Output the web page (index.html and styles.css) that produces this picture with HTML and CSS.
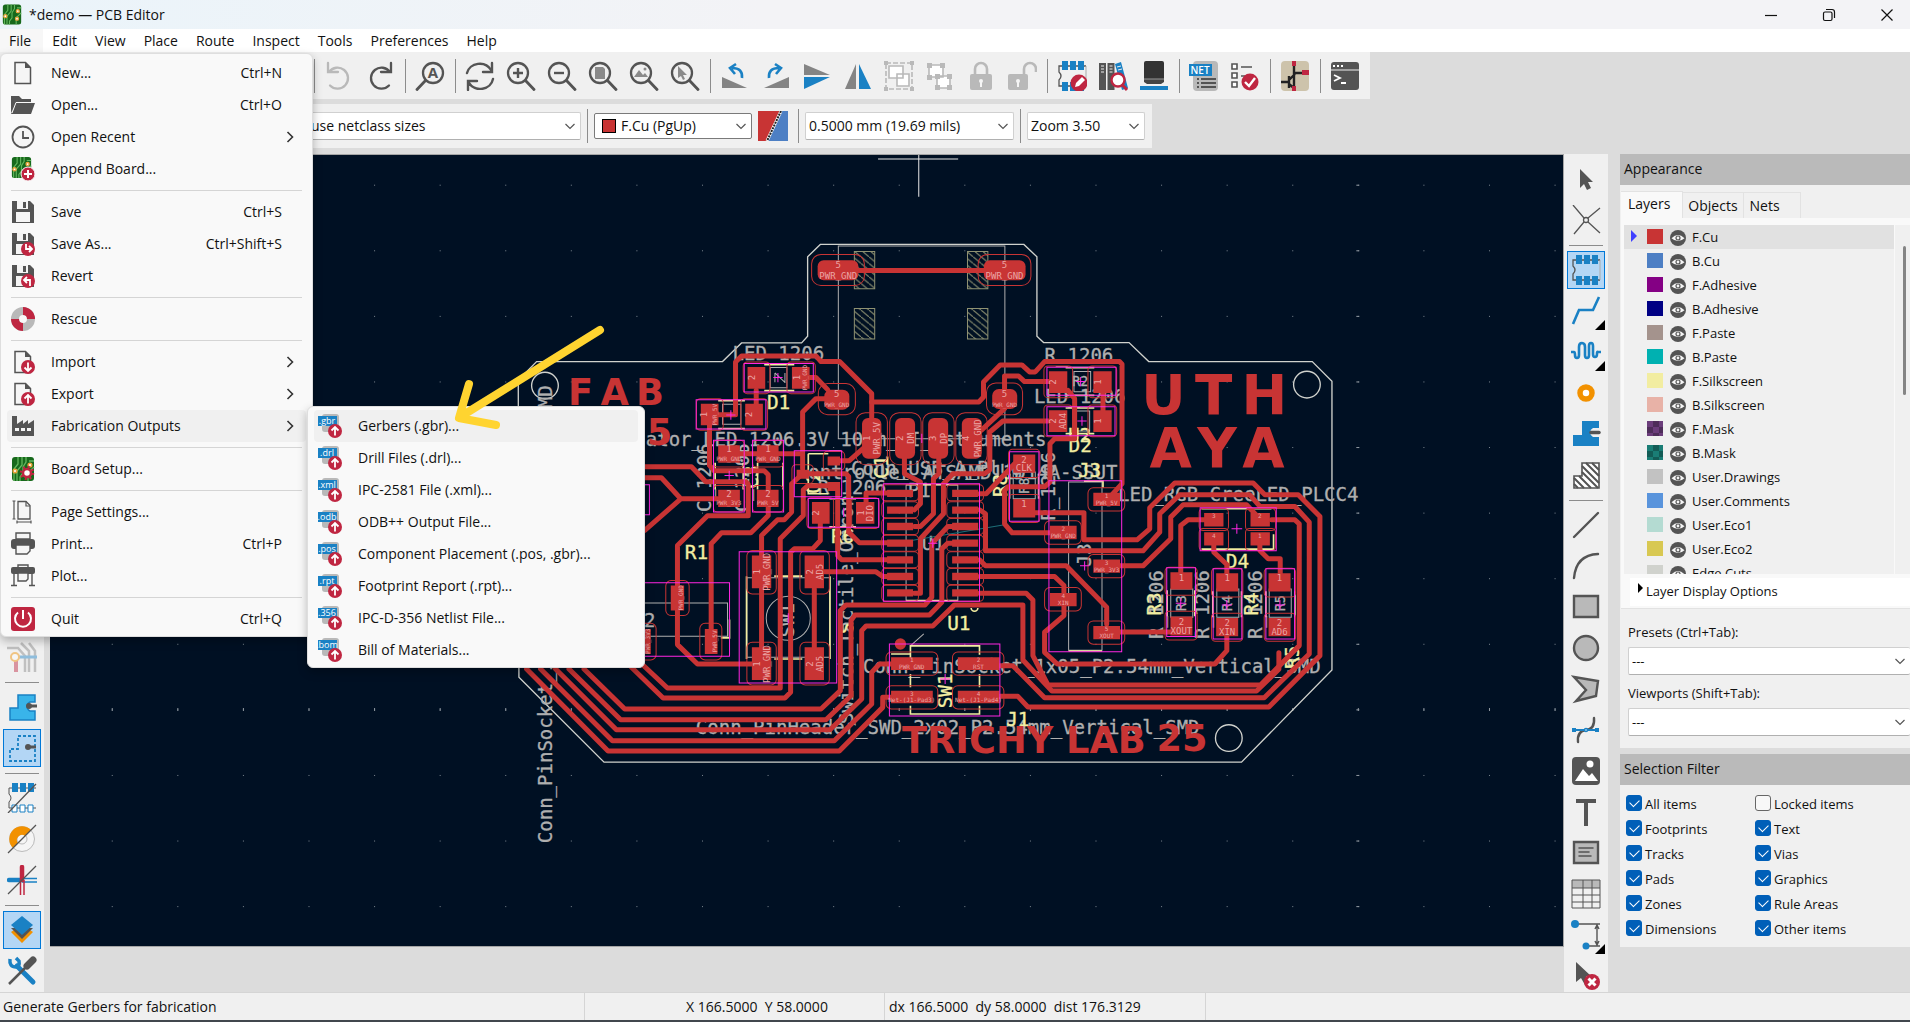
FILE: index.html
```html
<!DOCTYPE html>
<html lang="en">
<head>
<meta charset="utf-8">
<title>*demo — PCB Editor</title>
<link rel="stylesheet" href="styles.css">
</head>
<body>
<svg class="defs" aria-hidden="true">
  <defs>
    <symbol id="pcb" viewBox="0 0 24 24"><rect x="1" width="22" height="24" rx="3" fill="#17691c"/><path d="M7 0v7l-4 5v12M11 0v8l-5 6v10M15 0v5l-3 5v6l-3 4v4M23 10l-6 6v8M23 4h-5" fill="none" stroke="#63b85f" stroke-width="1.3"/><g fill="#fff" stroke="#e7a33c" stroke-width="1.6"><circle cx="4" cy="14" r="1.8"/><circle cx="19" cy="8" r="1.8"/><circle cx="18" cy="17" r="1.8"/></g></symbol>
    <symbol id="floppy" viewBox="0 0 24 24"><path d="M1 1h18l4 4v18H1z" fill="#545454"/><path d="M6 1h11v8H6zM5 12h14v10H5z" fill="#f5f5f5"/><path d="M12 2h3v6h-3z" fill="#545454"/></symbol>
    <symbol id="doc" viewBox="0 0 24 24"><path d="M4 1.500h10.500l5 5v16H4z" fill="#f5f5f5" stroke="#545454" stroke-width="1.500"/><path d="M14 1v6h6z" fill="#545454"/></symbol>
    <symbol id="up" viewBox="0 0 24 24"><circle cx="17" cy="17" r="7" fill="#bf2641"/><path d="M17 21.500v-8M13.500 16.500l3.500-3.500 3.500 3.500" fill="none" stroke="#fff" stroke-width="1.800"/></symbol>
    <symbol id="chev" viewBox="0 0 12 12"><path d="M1.500 4l4.500 4.500L10.500 4" fill="none" stroke="#555" stroke-width="1.200"/></symbol>
    <symbol id="sub" viewBox="0 0 8 14"><path d="M1.500 2l5 5-5 5" fill="none" stroke="#333" stroke-width="1.600"/></symbol>
    <symbol id="file" viewBox="0 0 24 24"><rect x="4" y="0" width="17" height="18" rx="3" fill="#b9b9b9"/><path d="M0 2h19v10H0z" fill="#1a81c4"/></symbol>
    <symbol id="lens" viewBox="0 0 30 30"><circle cx="12" cy="12" r="10" fill="none" stroke="#545454" stroke-width="2.300"/><path d="M19.500 19.500l8.500 9" stroke="#545454" stroke-width="2.800" stroke-linecap="round"/></symbol>
    <symbol id="turn" viewBox="0 0 30 30"><path d="M4 2v9h10M5 11a10.500 10.500 0 1 1 1 13.500" fill="none" stroke="currentColor" stroke-width="2.300" stroke-linecap="round"/></symbol>
    <symbol id="chip" viewBox="0 0 30 30"><path d="M29 5H2v6q4 4 0 8v6h27" fill="none" stroke="#545454" stroke-width="1.300"/><path d="M29 5v20" stroke="#aaa"/><path d="M5 0h6v9H5zM13 0h6v9h-6zM21 0h6v9h-6zM5 21h6v9H5zM13 21h6v9h-6zM21 21h6v9h-6z" fill="#1a81c4"/></symbol>
    <symbol id="eye" viewBox="0 0 16 16"><circle cx="8" cy="8" r="8" fill="#545454"/><path d="M1.500 8.200Q8 2 14.500 8.200 8 14 1.500 8.200z" fill="#f5f5f5"/><circle cx="8" cy="8" r="2" fill="none" stroke="#545454" stroke-width="1.200"/></symbol>
  </defs>
</svg>
<div class="app">
  <header class="titlebar">
    <svg class="logo"><use href="#pcb"/></svg>
    <h1>*demo — PCB Editor</h1>
    <div class="winctl">
      <button aria-label="Minimize"><svg viewBox="0 0 14 14"><path d="M1 7.500h12"/></svg></button>
      <button aria-label="Restore"><svg viewBox="0 0 14 14"><rect x="1.500" y="4" width="8.500" height="8.500" rx="1.500"/><path d="M4 1.500h6a2.500 2.500 0 0 1 2.500 2.500v6"/></svg></button>
      <button aria-label="Close"><svg viewBox="0 0 14 14"><path d="M1.500 1.500l11 11M12.500 1.500l-11 11"/></svg></button>
    </div>
  </header>
  <nav class="menubar">
    <button class="open">File</button><button>Edit</button><button>View</button><button>Place</button><button>Route</button><button>Inspect</button><button>Tools</button><button>Preferences</button><button>Help</button>
  </nav>

  <div class="toolbar main-tools">
    <i class="sep"></i>
    <button class="tool faint" aria-label="Undo"><svg><use href="#turn"/></svg></button>
    <button class="tool" aria-label="Redo"><svg viewBox="0 0 30 30"><g transform="matrix(-1 0 0 1 30 0)"><use href="#turn" width="30" height="30"/></g></svg></button>
    <i class="sep"></i>
    <button class="tool" aria-label="Find"><svg viewBox="0 0 30 30"><g transform="matrix(-1 0 0 1 30 0)"><use href="#lens" width="30" height="30"/></g><text x="18" y="17" class="lens-a">A</text></svg></button>
    <i class="sep"></i>
    <button class="tool" aria-label="Refresh"><svg viewBox="0 0 30 30" class="ln"><path d="M2 12A13 12 0 0 1 26 9M27 2v9h-9M28 18A13 12 0 0 1 4 22M3 29v-9h9"/></svg></button>
    <button class="tool" aria-label="Zoom in"><svg viewBox="0 0 30 30"><use href="#lens"/><path d="M7 12h10M12 7v10" stroke="#545454" stroke-width="2.400"/></svg></button>
    <button class="tool" aria-label="Zoom out"><svg viewBox="0 0 30 30"><use href="#lens"/><path d="M7 12h10" stroke="#545454" stroke-width="2.400"/></svg></button>
    <button class="tool" aria-label="Zoom to page"><svg viewBox="0 0 30 30"><use href="#lens"/><path d="M7 6h8l2 2v10H7z" fill="#8a8a8a"/></svg></button>
    <button class="tool" aria-label="Zoom to objects"><svg viewBox="0 0 30 30"><use href="#lens"/><path d="M5 16l5-7 4 5 2-2 3 4z" fill="#8a8a8a"/><circle cx="16" cy="8" r="1.500" fill="#8a8a8a"/></svg></button>
    <button class="tool" aria-label="Zoom to selection"><svg viewBox="0 0 30 30"><use href="#lens"/><path d="M8 5v12l3-2 2 4 2-1-2-4h4z" fill="#8a8a8a"/></svg></button>
    <i class="sep"></i>
    <button class="tool" aria-label="Rotate left"><svg viewBox="0 0 30 30"><path d="M2 16v11h25z" fill="#848484"/><path d="M22 17q1-10-10-10M16 3l-6 4 5 6" class="bl"/></svg></button>
    <button class="tool" aria-label="Rotate right"><svg viewBox="0 0 30 30"><path d="M28 16v11H3z" fill="#848484"/><path d="M8 17Q7 7 18 7M14 3l6 4-5 6" class="bl"/></svg></button>
    <button class="tool" aria-label="Mirror vertically"><svg viewBox="0 0 30 30"><path d="M2 3l26 11H2z" fill="#848484"/><path d="M2 16h26L2 28z" fill="#1a81c4"/></svg></button>
    <button class="tool" aria-label="Mirror horizontally"><svg viewBox="0 0 30 30"><path d="M13 3v25H2z" fill="#848484"/><path d="M16 3v25h12z" fill="#1a81c4"/></svg></button>
    <button class="tool" aria-label="Group"><svg viewBox="0 0 30 30" class="gr"><path d="M2 2h26v26H2z" stroke-dasharray="5 2" fill="none"/><path d="M5 5h14v12H5zM13 13h12v12H13z" fill="#fff"/><path d="M0 0h4v4H0zM26 0h4v4h-4zM0 26h4v4H0zM26 26h4v4h-4z" fill="#b9b9b9" stroke="none"/></svg></button>
    <button class="tool" aria-label="Ungroup"><svg viewBox="0 0 30 30" class="gr"><path d="M4 4h14v12H4zM12 15h13v12H12z" fill="#fff"/><path d="M2 2h5v5H2zM15 2h5v5h-5zM2 14h5v5H2zM10 13h5v5h-5zM22 13h5v5h-5zM10 24h5v5h-5zM22 24h5v5h-5z" fill="#b9b9b9" stroke="none"/></svg></button>
    <button class="tool" aria-label="Lock"><svg viewBox="0 0 30 30"><path d="M9 14V8a6 6 0 0 1 12 0v6" fill="none" stroke="#b9b9b9" stroke-width="2.600"/><rect x="4" y="13" width="22" height="16" rx="2" fill="#b9b9b9"/><circle cx="15" cy="20" r="2" fill="#f5f5f5"/><path d="M15 20v6" stroke="#f5f5f5" stroke-width="2"/></svg></button>
    <button class="tool" aria-label="Unlock"><svg viewBox="0 0 30 30"><path d="M17 14V8a6 6 0 0 1 12 0v3" fill="none" stroke="#b9b9b9" stroke-width="2.600"/><rect x="1" y="13" width="20" height="16" rx="2" fill="#b9b9b9"/><circle cx="11" cy="20" r="2" fill="#f5f5f5"/><path d="M11 20v6" stroke="#f5f5f5" stroke-width="2"/></svg></button>
    <i class="sep"></i>
    <button class="tool" aria-label="Footprint editor"><svg viewBox="0 0 30 30"><use href="#chip"/><circle cx="22" cy="22" r="8.500" fill="#bf2641"/><path d="M18 26l1-4 6-6 3 3-6 6z" fill="#fff"/></svg></button>
    <button class="tool" aria-label="Footprint libraries"><svg viewBox="0 0 30 30"><path d="M1 2h7v27H1zM9.500 2h7v27h-7z" fill="#545454"/><path d="M17 3l6-2 7 26-6 2z" fill="#1a81c4"/><path d="M3 5h3M3 8h3M3 11h3M11.500 5h3M11.500 8h3M11.500 11h3M19 6l4-1M20 9l4-1" stroke="#eee"/><circle cx="20" cy="19" r="6.500" fill="#fff" stroke="#bf2641" stroke-width="2.400"/><path d="M24.500 24l4.500 5" stroke="#bf2641" stroke-width="3"/></svg></button>
    <button class="tool" aria-label="3D viewer"><svg viewBox="0 0 30 30"><path d="M5 2q0-2 2-2h16q2 0 2 2v16H5z" fill="#333"/><path d="M5 18h20v3l-3 2H8l-3-2z" fill="#444"/><path d="M5 18h20" stroke="#999"/><path d="M1 25h28v4H1z" fill="#1a81c4"/></svg></button>
    <i class="sep"></i>
    <button class="tool" aria-label="Netlist"><svg viewBox="0 0 30 30"><rect x="4" width="25" height="30" rx="4" fill="#b9b9b9"/><path d="M0 3h23v12H0z" fill="#1a81c4"/><path d="M8 18h2M12 18h15M8 22h2M12 22h15M8 26h2M12 26h15" stroke="#545454" stroke-width="1.800"/><text x="11" y="13" class="net">NET</text></svg></button>
    <button class="tool" aria-label="Design rules checker"><svg viewBox="0 0 30 30"><path d="M2 3h5v5H2zM2 12h5v5H2zM2 21h5v5H2zM11 6h11M11 15h6" fill="#fff" stroke="#545454" stroke-width="1.600"/><circle cx="20" cy="21" r="8.500" fill="#bf2641"/><path d="M15 21l4 4 6-8" fill="none" stroke="#fff" stroke-width="2.400"/></svg></button>
    <i class="sep"></i>
    <button class="tool" aria-label="Schematic editor"><svg viewBox="0 0 30 30"><rect x="1" width="28" height="30" rx="4" fill="#cdc3ab"/><path d="M14 0v30M14 12h10M1 21h8M9 15v12M9 19l6-6M9 23l6 5" fill="none" stroke="#222" stroke-width="2.400"/><path d="M12 0h4v5h-4zM22 9h7v5h-7zM12 25h4v5h-4z" fill="#bf2641"/></svg></button>
    <i class="sep"></i>
    <button class="tool" aria-label="Scripting console"><svg viewBox="0 0 30 30"><rect x="1" y="1" width="28" height="28" rx="3" fill="#545454"/><path d="M1 9h28" stroke="#f0f0f0"/><path d="M3 5h2M7 5h2M11 5h2" stroke="#fff" stroke-width="2"/><path d="M4 14l6 3-6 3M11 22h5" fill="none" stroke="#fff" stroke-width="1.800"/></svg></button>
  </div>

  <div class="toolbar option-tools">
    <span class="combo track"><select aria-label="Track width"><option>use netclass sizes</option></select><svg><use href="#chev"/></svg></span>
    <i class="sep"></i>
    <span class="combo layer"><i class="swatch"></i><select aria-label="Layer"><option>F.Cu (PgUp)</option></select><svg><use href="#chev"/></svg></span>
    <button class="pair" aria-label="Layer pair"><svg viewBox="0 0 30 30"><path d="M0 0h30v30H0z" fill="#4d7fc4"/><path d="M0 0h22L9 30H0z" fill="#c83434"/><path d="M23 0L9 30" stroke="#fff" stroke-width="3"/><path d="M23 0L9 30" stroke="#222" stroke-width="2" stroke-dasharray="2 1"/></svg></button>
    <i class="sep"></i>
    <span class="combo grid"><select aria-label="Grid"><option>0.5000 mm (19.69 mils)</option></select><svg><use href="#chev"/></svg></span>
    <i class="sep"></i>
    <span class="combo zoom"><select aria-label="Zoom"><option>Zoom 3.50</option></select><svg><use href="#chev"/></svg></span>
  </div>

  <main class="work">
    <div class="rail left">
      <button class="tool ghost" aria-label="Ratsnest"><svg viewBox="0 0 30 30"><path d="M0 6h11l7 8v16M14 1l8 8v21M22 1l6 8v21" fill="none" stroke="#888" stroke-width="2.500"/><path d="M9 18v12" stroke="#bf2641" stroke-width="4"/><path d="M9 15h21" stroke="#1a81c4" stroke-width="3"/><circle cx="8" cy="15" r="4" fill="#fff" stroke="#f29100" stroke-width="2"/></svg></button>
      <i class="sep"></i>
      <button class="tool" aria-label="Show filled zones"><svg viewBox="0 0 30 30"><path d="M11 3h17v7h-5a5 5 0 0 0 0 9h5v9H3V16h8z" fill="#39b4ea" stroke="#1a81c4" stroke-width="1.500"/><circle cx="22" cy="14" r="3" fill="#545454"/><path d="M22 14h8" stroke="#545454" stroke-width="3"/></svg></button>
      <button class="tool on" aria-label="Show zone borders"><svg viewBox="0 0 30 30"><path d="M11 3h17v25H3V16h8z" fill="none" stroke="#1a81c4" stroke-width="1.800" stroke-dasharray="3 2"/><circle cx="21" cy="14" r="3" fill="#545454"/><path d="M22 14h7" stroke="#545454" stroke-width="3"/></svg></button>
      <i class="sep"></i>
      <button class="tool" aria-label="Pad outlines"><svg viewBox="0 0 30 30"><path d="M29 5H2v6q4 4 0 8v6h27" fill="none" stroke="#545454"/><path d="M5 0h6v9H5zM13 0h6v9h-6zM21 0h6v9h-6z" fill="#1a81c4"/><path d="M5 22h5v7H5zM13 22h5v7h-5zM21 22h5v7h-5z" fill="#fff" stroke="#1a81c4"/><path d="M1 30L29 1" stroke="#545454" stroke-width="1.300"/></svg></button>
      <button class="tool" aria-label="Via outlines"><svg viewBox="0 0 30 30"><circle cx="15" cy="15" r="12.500" fill="#f5f5f5" stroke="#bbb"/><circle cx="15" cy="15" r="5" fill="none" stroke="#bbb"/><path d="M6 24A12.500 12.500 0 0 1 24 6l-6 6a5 5 0 0 0-7 7z" fill="#f29100"/><path d="M1 29L29 1" stroke="#545454" stroke-width="1.300"/></svg></button>
      <button class="tool" aria-label="Track outlines"><svg viewBox="0 0 30 30"><path d="M2 15h13" stroke="#1a81c4" stroke-width="4.500" stroke-linecap="round"/><path d="M15 13.500h15M15 17h15" stroke="#1a81c4" stroke-width="1.500"/><path d="M15 2v13" stroke="#bf2641" stroke-width="4.500" stroke-linecap="round"/><path d="M13.500 15v15M17 15v15" stroke="#bf2641" stroke-width="1.500"/><path d="M1 29L29 1" stroke="#545454" stroke-width="1.300"/></svg></button>
      <i class="sep"></i>
      <button class="tool on" aria-label="Appearance manager"><svg viewBox="0 0 30 30"><path d="M4 17l11 11 11-11-3-2-8 8-8-8z" fill="#f29100"/><path d="M4 13l11 11 11-11z" fill="#545454"/><path d="M15 1l11 9-11 10L4 10z" fill="#1a81c4"/></svg></button>
      <button class="tool" aria-label="Properties manager"><svg viewBox="0 0 30 30"><path d="M10 10l16 16" stroke="#1a81c4" stroke-width="5" stroke-linecap="round"/><path d="M3 3q-1 8 6 8 4-1 3-6L9 2" fill="none" stroke="#1a81c4" stroke-width="3.500"/><path d="M2 28L18 12" stroke="#545454" stroke-width="2.500"/><path d="M20 10l6-6" stroke="#545454" stroke-width="7" stroke-linecap="round"/></svg></button>
    </div>

    <div class="canvas">
      <svg class="board" viewBox="-1350 -525 4539 2370" preserveAspectRatio="xMinYMin slice" role="img" aria-label="Board layout">
        <defs>
          <pattern id="dots" x="-1165" y="-436" width="196.500" height="196.500" patternUnits="userSpaceOnUse"><path d="M0 0h3v3H0z" fill="#7d8790"/></pattern>
          <pattern id="dotrow" x="-1165" y="1132" width="196.500" height="9" patternUnits="userSpaceOnUse"><path d="M0 0h3v9H0z" fill="#9098a0"/></pattern>
          <pattern id="dotcol" x="2564" y="-436" width="9" height="196.500" patternUnits="userSpaceOnUse"><path d="M0 0h9v3H0z" fill="#9098a0"/></pattern>
          <pattern id="hatch" width="24" height="20" patternUnits="userSpaceOnUse"><path d="M0 0l24 20" stroke="#8f9272" stroke-width="3"/></pattern>
        </defs>
        <path d="M-1350-528h4539v2376h-4539z" fill="url(#dots)"/>
        <path d="M-1350 1132h4539v9h-4539z" fill="url(#dotrow)"/>
        <path d="M2564-528h9v2376h-9z" fill="url(#dotcol)"/>
        <path class="cursor" d="M1253-528v128M1131-513h240"/>
        <path class="edge" d="M53 150l55-56h557l57-56h180l18-20v-238l38-37h610l39 37V18l20 19h256l59 57h490l59 59v865l-271 276H310L55 1040z"/>
        <g class="edge"><circle cx="133" cy="166" r="40"/><circle cx="2416" cy="163" r="40"/><circle cx="2182" cy="1222" r="40"/></g>

        <g class="fab">
          <text x="695" y="88">LED_1206</text>
          <text x="435" y="347">ator_LED_1206.3V_100m_TI_nstruments</text>
          <text x="950" y="490">R_1206</text>
          <text x="585" y="1210">Conn_PinHeader_SWD_2x02_P2.54mm_Vertical_SMD</text>
          <text x="1085" y="1027">Conn_PinSocket_1x05_P2.54mm_Vertical_SMD</text>
          <text x="1630" y="95">R_1206</text>
          <text x="1598" y="217">LED_1206</text>
          <text x="1848" y="445" text-anchor="end">ontroller_ATSAMD11D14A-SSUT</text>
          <text x="1050" y="435">Conn_USB_A_Plug</text>
          <text x="1850" y="513">LED_RGB_CreeLED_PLCC4</text>
          <text x="430" y="890">2</text>
          <text x="1220" y="500">P1</text>
          <text x="1262" y="658">U1</text>
          <text transform="translate(153 1537) rotate(-90)">Conn_PinSocket_1x06_P2.54mm_Vertical_SMD</text>
          <text transform="translate(630 545) rotate(-90)">C_1206</text>
          <text transform="translate(745 545) rotate(-90)">C_1206</text>
          <text transform="translate(1055 1180) rotate(-90)">Switch_Tactile_Omron</text>
          <text transform="translate(880 920) rotate(-90)">SW1</text>
          <text transform="translate(1662 570) rotate(-90)">R_1206</text>
          <text transform="translate(1770 707) rotate(-90)">J3</text>
          <text transform="translate(1985 925) rotate(-90)">R_1206</text>
          <text transform="translate(2122 925) rotate(-90)">R_1206</text>
          <text transform="translate(2280 925) rotate(-90)">R_1206</text>
          <g class="small">
            <text transform="translate(2055 842) rotate(-90)">R3</text>
            <text transform="translate(2192 842) rotate(-90)">R4</text>
            <text transform="translate(2350 842) rotate(-90)">R5</text>
            <text transform="translate(1582 490) rotate(-90)">R8</text>
            <text x="1713" y="168">R2</text>
          </g>
        </g>
        <path class="fabline" d="M1012-252h499V325h-499zM738 742h248v238H738zM430 817h250v100H430zM1702 455h100v504h-100zM1215 463h155v347h-155zM665 222h55v60h-55zM808 112h50v60h-50zM1718 124h50v60h-50zM1715 242h50v60h-50zM1536 425h66v80h-66zM2008 775h66v85h-66zM2146 775h66v85h-66zM2303 775h66v85h-66zM822 128l30 28M822 156v-28M852 128v30M1228 946l40-36"/>
        <circle class="fabline" cx="862" cy="863" r="66"/>
        <path class="hatched" d="M1060-236h61v112h-61zM1399-236h61v112h-61zM1060-65h61v91h-61zM1399-65h61v91h-61z"/>
        <path d="M1200 635l310-52" stroke="#1d6f78" stroke-width="3"/>

        <g class="silk">
          <path d="M790 103h90M790 181h90M652 211h80M652 295h80M643 397v80M846 397v80M727 397v80M770 397v80M922 370v120h60M922 370h60M985 505h80M985 589h80M737 737v248M987 737v248M820 737h84M820 985h84M686 867v55h-26M1215 463h155M1215 810h155M1693 112h86M1693 195h86M1693 233h86M1693 310h86M1525 430v75M1612 430v75M1748 452h57v20M1702 961h100M2100 535h210M2100 656h216v-45M1997 779v78M2080 779v78M2134 782v78M2220 782v78M2293 782v78M2380 782v78M1170 970h58v-24h207v26M1228 970v30M1435 1030v40M1228 1030v40M1228 1125v25h207v-25M1410 832a10 10 0 0 0 20 0"/>
          <text x="798" y="235">D1</text><text x="552" y="685">R1</text><text x="1338" y="898">U1</text><text x="1702" y="365">D2</text><text x="1700" y="335">U2</text><text x="1730" y="440">J3</text><text x="2173" y="713">D4</text><text x="1515" y="1185">J1</text><text x="990" y="638">R6</text>
          <text transform="translate(1160 445) rotate(-90)">C1</text>
          <text transform="translate(770 475) rotate(-90)">C3</text>
          <text transform="translate(958 490) rotate(-90)">Q2</text>
          <text transform="translate(1517 500) rotate(-90)">R8</text>
          <text transform="translate(1980 855) rotate(-90)">R3</text>
          <text transform="translate(2268 855) rotate(-90)">R4</text>
          <text transform="translate(2393 1015) rotate(-90)">R5</text>
          <text transform="translate(1055 910) rotate(-90)">S</text>
          <text transform="translate(1352 1133) rotate(-90)">SW1</text>
        </g>

        <g class="copper-text">
          <text x="202" y="225">F&#8201;A&#8201;B</text>
          <text x="438" y="345">5</text>
          <g class="huge"><text x="1920" y="251">U&#8198;T&#8198;H</text><text x="1944" y="410">A&#8202;Y&#8202;A</text></g>
          <text x="1203" y="1266">TRICHY LAB</text>
          <text x="1965" y="1261">25</text>
        </g>

        <path class="trk" d="M626 285v120l14 16h150l12 12v50M645 253h59V95l18-18h223l15 17h56l96 96v80M766 240v-60M925 142h20l35 36M975 205h-30l-40 40v170M710 370h195M432 409h140l43 45h120l7 8v94H620l-90 89v297l60 58h165M432 442h50l58 63h110M540 505l-108 95M802 530v25l-52 52h-88l-31 33v255M905 430l-33 30v85l-22 23h-20l-48 47v335M980 466h-60l-13 12v77l-69 70v447H500l-80-75M958 580v50l-23 25h-55l-11 10v420l-17 17H487l-95-92M940 775v175M968 724h157l20 14h20M1010 475v200l12 13h143M925 430h110l8 8v167l32 32h90M1095 520v-32h65M1015 391h30l45-40"/>
        <path class="trk" d="M250 1015l122 120h588l58-55V840l17-17h237l20-23V640l48-52h20M205 1015l155 152h615l75-72V870l12-17h223l37-38V655l18-17h20M165 1015l182 182h640l95-92V900l13-14h200l65-63h205v165l87 93h613l67-65v-50M120 1015l215 215h665l112-110v-95l23-25h35M78 1015l244 246h693l130-131v-30h30"/>
        <path class="trk" d="M1112 215h321l14-15v-45l50-51h65l23 21h17l28-31h225l7 8v358l-32 35M1210 380v50l48 25v65l-18 18M1313 380v50l-16 15v105l-39 38h-18M1240 788h18V625l69-75v-90l28-30h95l16-12V305l39-33h140M1440 300l70-65M1510 180v-43h42l18 17h75M1435 490h20l85-90M1435 538l18 12v111h472l50-56v-55l60-57h210l30 35h105l43 47v395l-135 131H1630l-95-96h-45M1600 547h148v81h159l38-33v-63l75-74h235l35 35h100l65 65v417l-153 154h-722l-30-32h-60M1700 180l20 25v120h-60l-14 15v115l-16 14h-110l-10 11v100l23 27h117M1805 180v60M1435 688l18 18h242l121 124v50M1435 738h225l28 27v90l-58 50v60l38 35h472l36-40v-50M1435 788h140l20 20v167l45 88h637l116-118V580l-13-12h-70M1855 706h70l83-81v-65l37-37h190l35 37M2120 568h-60l-22 17v145M2137 645v20l39 37v28M2275 640v20l25 25h36v45M1855 904h155M968-179h510"/>

        <g class="pads">
          <path d="M600 220h53v65h-53zM733 220h53v65h-53zM740 110h53v65h-53zM873 110h53v65h-53zM652 345h65v52h-65zM768 345h65v52h-65zM652 478h65v52h-65zM768 478h65v52h-65zM980 378h37v27h-37zM887 418h37v27h-37zM980 455h37v27h-37zM933 515h53v65h-53zM1065 515h55v65h-55zM510 765h40v75h-40zM612 895h38v75h-38zM432 895h18v75h-18zM753 675h58v98h-58zM911 675h58v98h-58zM753 950h58v98h-58zM911 950h58v98h-58z"/>
          <path d="M1158 478h78v22h-78zM1158 528h78v22h-78zM1158 577h78v22h-78zM1158 627h78v22h-78zM1158 677h78v22h-78zM1158 727h78v22h-78zM1158 776h78v22h-78zM1353 478h78v22h-78zM1353 528h78v22h-78zM1353 577h78v22h-78zM1353 627h78v22h-78zM1353 677h78v22h-78zM1353 727h78v22h-78zM1353 776h78v22h-78z"/>
          <path d="M1643 123h55v65h-55zM1776 123h55v65h-55zM1643 240h55v65h-55zM1776 240h55v65h-55zM1536 372h66v55h-66zM1536 506h66v55h-66zM1776 487h80v40h-80zM1646 586h80v40h-80zM1776 687h80v40h-80zM1646 787h80v40h-80zM1776 886h80v40h-80zM2108 548h58v40h-58zM2247 548h58v40h-58zM2108 605h58v40h-58zM2247 605h58v40h-58zM2007 725h66v52h-66zM2007 858h66v57h-66zM2144 728h66v55h-66zM2144 862h66v55h-66zM2301 728h66v55h-66zM2301 862h66v55h-66zM1170 980h125v38h-125zM1370 980h125v38h-125zM1170 1080h125v38h-125zM1370 1080h125v38h-125z"/>
          <rect x="950" y="-210" width="122" height="60" rx="18"/><rect x="1448" y="-210" width="125" height="60" rx="18"/><rect x="970" y="178" width="75" height="60" rx="20"/><rect x="1473" y="176" width="75" height="60" rx="20"/>
          <rect x="1083" y="263" width="58" height="122" rx="18"/><rect x="1182" y="263" width="60" height="122" rx="18"/><rect x="1281" y="263" width="60" height="122" rx="18"/><rect x="1382" y="263" width="60" height="122" rx="18"/>
          <circle cx="1198" cy="940" r="17"/>
        </g>
        <g class="clear">
          <rect x="932" y="-227" width="158" height="93" rx="28"/><rect x="1431" y="-227" width="158" height="93" rx="28"/><rect x="952" y="160" width="111" height="93" rx="28"/><rect x="1456" y="158" width="108" height="95" rx="28"/>
          <rect x="1065" y="247" width="94" height="156" rx="28"/><rect x="1166" y="247" width="94" height="156" rx="28"/><rect x="1265" y="247" width="94" height="156" rx="28"/><rect x="1364" y="247" width="94" height="156" rx="28"/>
          <rect x="587" y="205" width="80" height="95" rx="12"/><rect x="720" y="205" width="80" height="95" rx="12"/><rect x="727" y="95" width="80" height="95" rx="12"/><rect x="858" y="95" width="85" height="95" rx="12"/>
          <rect x="638" y="330" width="92" height="80" rx="12"/><rect x="755" y="330" width="92" height="80" rx="12"/><rect x="638" y="465" width="92" height="80" rx="12"/><rect x="755" y="465" width="92" height="80" rx="12"/>
          <rect x="967" y="363" width="64" height="56" rx="12"/><rect x="873" y="403" width="64" height="56" rx="12"/><rect x="918" y="502" width="80" height="92" rx="12"/><rect x="1052" y="502" width="82" height="92" rx="12"/>
          <rect x="495" y="750" width="70" height="105" rx="16"/><rect x="597" y="878" width="66" height="110" rx="16"/><rect x="400" y="878" width="66" height="110" rx="16"/><rect x="738" y="660" width="88" height="130" rx="16"/><rect x="897" y="660" width="88" height="130" rx="16"/><rect x="738" y="935" width="88" height="128" rx="16"/><rect x="897" y="935" width="88" height="128" rx="16"/>
          <rect x="1142" y="463" width="110" height="48" rx="12"/><rect x="1142" y="514" width="110" height="48" rx="12"/><rect x="1142" y="564" width="110" height="48" rx="12"/><rect x="1142" y="614" width="110" height="48" rx="12"/><rect x="1142" y="664" width="110" height="48" rx="12"/><rect x="1142" y="714" width="110" height="48" rx="12"/><rect x="1142" y="764" width="110" height="48" rx="12"/>
          <rect x="1337" y="463" width="110" height="48" rx="12"/><rect x="1337" y="514" width="110" height="48" rx="12"/><rect x="1337" y="564" width="110" height="48" rx="12"/><rect x="1337" y="614" width="110" height="48" rx="12"/><rect x="1337" y="664" width="110" height="48" rx="12"/><rect x="1337" y="714" width="110" height="48" rx="12"/><rect x="1337" y="764" width="110" height="48" rx="12"/>
          <rect x="1628" y="107" width="86" height="95" rx="12"/><rect x="1760" y="107" width="86" height="95" rx="12"/><rect x="1628" y="224" width="86" height="95" rx="12"/><rect x="1760" y="224" width="86" height="95" rx="12"/><rect x="1522" y="357" width="94" height="84" rx="12"/><rect x="1522" y="492" width="94" height="84" rx="12"/>
          <rect x="1760" y="472" width="110" height="70" rx="16"/><rect x="1630" y="571" width="110" height="70" rx="16"/><rect x="1760" y="672" width="110" height="70" rx="16"/><rect x="1630" y="771" width="110" height="70" rx="16"/><rect x="1760" y="871" width="110" height="70" rx="16"/>
          <rect x="2093" y="534" width="88" height="66" rx="12"/><rect x="2232" y="534" width="90" height="66" rx="12"/><rect x="2093" y="594" width="88" height="66" rx="12"/><rect x="2232" y="594" width="90" height="66" rx="12"/>
          <rect x="1991" y="710" width="96" height="84" rx="12"/><rect x="1991" y="842" width="96" height="86" rx="12"/><rect x="2130" y="713" width="94" height="86" rx="12"/><rect x="2130" y="848" width="94" height="84" rx="12"/><rect x="2288" y="713" width="94" height="86" rx="12"/><rect x="2288" y="848" width="94" height="84" rx="12"/>
          <rect x="1155" y="964" width="155" height="70" rx="16"/><rect x="1354" y="964" width="154" height="70" rx="16"/><rect x="1155" y="1065" width="155" height="70" rx="16"/><rect x="1354" y="1065" width="154" height="70" rx="16"/>
        </g>
        <path class="court" d="M586 208h209v88H586zM730 100h207v85H730zM638 330h92v215h-92zM755 330h93v215h-93zM880 361h142v138H880zM922 504h211v86H922zM715 664h292v393H715zM430 757h256v220H430zM430 463h16v90h-16zM1637 111h207v84h-207zM1637 229h204v87h-204zM1525 364h88v208h-88zM1147 460h288v352h-288zM1643 451h218v512h-218zM2096 532h228v129h-228zM1996 712h86v206h-86zM2135 715h86v210h-86zM2293 715h86v210h-86zM1165 940h331v216h-331z"/>
        <path class="court" d="M690 240v28M676 254h28M831 128v28M817 142h28M685 421v28M671 435h28M1738 140v28M1724 154h28M1742 258v28M1728 272h28M1262 310v28M1295 624v28M1281 638h28M1750 692v28M1736 706h28M2206 580v30M2190 595h32M2038 803v30M2023 818h30M2176 808v30M2161 823h30M2335 808v30M2320 823h30M862 848v30M1028 532v28M1332 1030v30M1317 1045h30"/>

        <g class="padtext">
          <text x="1012" y="-187">5</text><text x="1012" y="-153">PWR_GND</text><text x="1510" y="-187">5</text><text x="1510" y="-153">PWR_GND</text>
          <text x="1007" y="200">5</text><text x="1510" y="200">5</text>
          <text x="684" y="366">1</text><text x="801" y="366">1</text><text x="684" y="499">2</text><text x="801" y="499">2</text>
          <text x="1568" y="397">2</text><text x="1568" y="422">CLK</text><text x="1568" y="530">1</text>
          <text x="2040" y="750">1</text><text x="2177" y="752">1</text><text x="2334" y="752">1</text>
          <text x="2040" y="882">2</text><text x="2040" y="909">XOUT</text><text x="2177" y="886">2</text><text x="2177" y="912">XIN</text><text x="2334" y="886">2</text><text x="2334" y="912">AD6</text>
          <g class="tiny">
            <text x="1007" y="230">PWR_GND</text><text x="1510" y="230">PWR_GND</text>
            <text x="684" y="391">PWR_GND</text><text x="801" y="391">PWR_GND</text><text x="684" y="525">PWR_3V3</text><text x="801" y="525">PWR_5V</text>
            <text x="1816" y="503">1</text><text x="1816" y="523">PWR_5V</text><text x="1686" y="602">2</text><text x="1686" y="622">PWR_GND</text><text x="1816" y="703">3</text><text x="1816" y="723">PWR_3V3</text><text x="1686" y="803">4</text><text x="1686" y="823">XIN</text><text x="1816" y="902">5</text><text x="1816" y="923">XOUT</text>
            <text x="1232" y="995">1</text><text x="1232" y="1015">PWR_GND</text><text x="1432" y="995">2</text><text x="1432" y="1015">RST</text><text x="1232" y="1095">3</text><text x="1232" y="1115">Net-(J1-Pad3)</text><text x="1432" y="1095">4</text><text x="1432" y="1115">Net-(J1-Pad4)</text>
            <text x="2137" y="563">3</text><text x="2275" y="563">2</text><text x="2137" y="622">4</text><text x="2275" y="622">1</text>
            <text transform="translate(647 253) rotate(-90)">PWR_5V</text><text transform="translate(918 142) rotate(-90)">PWR_GND</text><text transform="translate(547 802) rotate(-90)">PWR_GND</text><text transform="translate(647 932) rotate(-90)">PWR_5V</text><text transform="translate(447 932) rotate(-90)">PWR_3V3</text>
          </g>
          <text transform="translate(620 253) rotate(-90)">1</text><text transform="translate(754 253) rotate(-90)">2</text><text transform="translate(762 142) rotate(-90)">2</text><text transform="translate(896 142) rotate(-90)">1</text>
          <text transform="translate(954 548) rotate(-90)">2</text><text transform="translate(1088 548) rotate(-90)">1</text><text transform="translate(1116 548) rotate(-90)">DIO</text>
          <text transform="translate(777 724) rotate(-90)">1</text><text transform="translate(806 724) rotate(-90)">PWR_GND</text><text transform="translate(935 724) rotate(-90)">2</text><text transform="translate(965 724) rotate(-90)">AD5</text>
          <text transform="translate(777 1000) rotate(-90)">1</text><text transform="translate(806 1000) rotate(-90)">PWR_GND</text><text transform="translate(935 1000) rotate(-90)">2</text><text transform="translate(965 1000) rotate(-90)">AD5</text>
          <text transform="translate(1106 324) rotate(-90)">1</text><text transform="translate(1138 324) rotate(-90)">PWR_5V</text><text transform="translate(1205 324) rotate(-90)">2</text><text transform="translate(1238 324) rotate(-90)">DM</text><text transform="translate(1304 324) rotate(-90)">3</text><text transform="translate(1338 324) rotate(-90)">DP</text><text transform="translate(1404 324) rotate(-90)">4</text><text transform="translate(1438 324) rotate(-90)">PWR_GND</text>
          <text transform="translate(1665 155) rotate(-90)">2</text><text transform="translate(1798 155) rotate(-90)">1</text><text transform="translate(1665 272) rotate(-90)">2</text><text transform="translate(1693 272) rotate(-90)">AD4</text><text transform="translate(1798 272) rotate(-90)">1</text>
        </g>
      </svg>
    </div>

    <div class="rail right">
      <button class="tool" aria-label="Select"><svg viewBox="0 0 30 30"><path d="M9 5v19l4-4 3 6 4-2-3-6h5z" fill="#545454"/></svg></button>
      <button class="tool" aria-label="Local ratsnest"><svg viewBox="0 0 30 30" class="thin"><circle cx="15" cy="15" r="2.500"/><path d="M2 0l11 13M17 17l12 11M29 3L17 13M13 17L3 29"/></svg></button>
      <i class="sep"></i>
      <button class="tool on" aria-label="Add footprint"><svg><use href="#chip"/></svg></button>
      <button class="tool more" aria-label="Route track"><svg viewBox="0 0 30 30"><path d="M2 28l6-14h14l6-13" class="bl"/></svg></button>
      <button class="tool more" aria-label="Tune length"><svg viewBox="0 0 30 30"><path d="M0 15h3q1 0 1 3t2 3 2-3V10q0-4 3-4t3 4v8q0 3 2 3t2-3V9q0-3 2-3t2 3v8q0 3 2 3t2-3 1-2h3" class="bl"/></svg></button>
      <button class="tool" aria-label="Add via"><svg viewBox="0 0 30 30"><circle cx="15" cy="15" r="6" fill="#fff" stroke="#f29100" stroke-width="5.500"/></svg></button>
      <button class="tool" aria-label="Add zone"><svg viewBox="0 0 30 30"><path d="M11 2h17v7h-6a5 5 0 0 0 0 9h6v9H2V16h9z" fill="#1a81c4"/><path d="M20 13.500h8" stroke="#545454" stroke-width="3.500" stroke-linecap="round"/></svg></button>
      <button class="tool" aria-label="Rule area"><svg viewBox="0 0 30 30"><path d="M11 3h17v25H3V16h8z" fill="#fff" stroke="#545454" stroke-width="1.600"/><path d="M3 18l10 10M3 24l4 4M8 16l12 12M11 12l16 16M11 6l17 17M15 3l13 13M21 3l7 7" stroke="#545454" stroke-width="2"/></svg></button>
      <i class="sep"></i>
      <button class="tool" aria-label="Draw line"><svg viewBox="0 0 30 30" class="ln"><path d="M3 27L27 3"/></svg></button>
      <button class="tool" aria-label="Draw arc"><svg viewBox="0 0 30 30" class="ln"><path d="M3 27Q5 4 27 3"/></svg></button>
      <button class="tool" aria-label="Draw rectangle"><svg viewBox="0 0 30 30" class="ln"><path d="M3 4h24v21H3z" fill="#b9b9b9"/></svg></button>
      <button class="tool" aria-label="Draw circle"><svg viewBox="0 0 30 30" class="ln"><circle cx="15" cy="15" r="12" fill="#b9b9b9"/></svg></button>
      <button class="tool" aria-label="Draw polygon"><svg viewBox="0 0 30 30" class="ln"><path d="M3 3l24 4-2 15-20 5 10-11z" fill="#b9b9b9"/></svg></button>
      <button class="tool" aria-label="Draw bezier"><svg viewBox="0 0 30 30" class="ln"><path d="M23 3q1 11-8 12T7 27"/><path d="M2 15h25" stroke="#1a81c4" stroke-width="2"/><path d="M1 13h4v4H1zM24 13h4v4h-4z" fill="#1a81c4" stroke="none"/><circle cx="15" cy="15" r="1.500" stroke="#1a81c4" stroke-width="1.500" fill="#fff"/></svg></button>
      <button class="tool" aria-label="Place image"><svg viewBox="0 0 30 30"><rect x="1" y="1" width="28" height="28" rx="4" fill="#545454"/><path d="M4 25l8-12 6 7 3-3 6 8z" fill="#fff"/><circle cx="19" cy="8" r="3.500" fill="#fff"/></svg></button>
      <button class="tool" aria-label="Place text"><svg viewBox="0 0 30 30"><path d="M5 4h20M15 4v25" stroke="#545454" stroke-width="4"/></svg></button>
      <button class="tool" aria-label="Place text box"><svg viewBox="0 0 30 30" class="ln"><path d="M3 4h24v21H3z" fill="#b9b9b9"/><path d="M8 10h14M8 14h10M8 18h12" stroke-width="1.500"/></svg></button>
      <button class="tool" aria-label="Place table"><svg viewBox="0 0 30 30"><path d="M1 1h28v8H1z" fill="#b9b9b9"/><path d="M1 1h28v28H1zM1 9h28M1 23h28M12 1v28M21 1v28M1 16h28" fill="none" stroke="#545454"/></svg></button>
      <button class="tool more" aria-label="Place dimension"><svg viewBox="0 0 30 30"><path d="M4 4h25M15 26h14M26 6v18M24 9l2-4 2 4M24 21l2 4 2-4" fill="none" stroke="#545454" stroke-width="1.400"/><circle cx="4" cy="4" r="4" fill="#1a81c4"/><circle cx="15" cy="26" r="3.500" fill="#1a81c4"/></svg></button>
      <button class="tool" aria-label="Delete"><svg viewBox="0 0 30 30"><path d="M5 1v20l5-4 4 7 4-2-3-7h5z" fill="#545454"/><circle cx="21" cy="21" r="8" fill="#bf2641"/><path d="M17.500 17.500l7 7M24.500 17.500l-7 7" stroke="#fff" stroke-width="3"/></svg></button>
    </div>

    <aside class="panels">
      <h2>Appearance</h2>
      <section class="appearance">
        <div class="tabs"><button class="current">Layers</button><button>Objects</button><button class="nets">Nets</button></div>
        <div class="page">
          <div class="list">
            <ul>
              <li class="sel"><i class="c1"></i><svg><use href="#eye"/></svg>F.Cu</li>
              <li><i class="c2"></i><svg><use href="#eye"/></svg>B.Cu</li>
              <li><i class="c3"></i><svg><use href="#eye"/></svg>F.Adhesive</li>
              <li><i class="c4"></i><svg><use href="#eye"/></svg>B.Adhesive</li>
              <li><i class="c5"></i><svg><use href="#eye"/></svg>F.Paste</li>
              <li><i class="c6"></i><svg><use href="#eye"/></svg>B.Paste</li>
              <li><i class="c7"></i><svg><use href="#eye"/></svg>F.Silkscreen</li>
              <li><i class="c8"></i><svg><use href="#eye"/></svg>B.Silkscreen</li>
              <li><i class="c9 mask"></i><svg><use href="#eye"/></svg>F.Mask</li>
              <li><i class="c10 mask"></i><svg><use href="#eye"/></svg>B.Mask</li>
              <li><i class="c11"></i><svg><use href="#eye"/></svg>User.Drawings</li>
              <li><i class="c12"></i><svg><use href="#eye"/></svg>User.Comments</li>
              <li><i class="c13"></i><svg><use href="#eye"/></svg>User.Eco1</li>
              <li><i class="c14"></i><svg><use href="#eye"/></svg>User.Eco2</li>
              <li><i class="c15"></i><svg><use href="#eye"/></svg>Edge.Cuts</li>
            </ul>
            <div class="scroll"><i></i></div>
          </div>
          <button class="expander">Layer Display Options</button>
        </div>
        <div class="presets">
          <label for="presets">Presets (Ctrl+Tab):</label>
          <span class="combo"><select id="presets"><option>---</option></select><svg><use href="#chev"/></svg></span>
          <label for="viewports">Viewports (Shift+Tab):</label>
          <span class="combo"><select id="viewports"><option>---</option></select><svg><use href="#chev"/></svg></span>
        </div>
      </section>
      <h2>Selection Filter</h2>
      <section class="filter">
        <label><input type="checkbox" checked>All items</label><label><input type="checkbox">Locked items</label>
        <label><input type="checkbox" checked>Footprints</label><label><input type="checkbox" checked>Text</label>
        <label><input type="checkbox" checked>Tracks</label><label><input type="checkbox" checked>Vias</label>
        <label><input type="checkbox" checked>Pads</label><label><input type="checkbox" checked>Graphics</label>
        <label><input type="checkbox" checked>Zones</label><label><input type="checkbox" checked>Rule Areas</label>
        <label><input type="checkbox" checked>Dimensions</label><label><input type="checkbox" checked>Other items</label>
      </section>
    </aside>
  </main>

  <footer class="status"><span class="msg">Generate Gerbers for fabrication</span><span class="gap"></span><span class="pos">X 166.5000&nbsp; Y 58.0000</span><span class="delta">dx 166.5000&nbsp; dy 58.0000&nbsp; dist 176.3129</span><span class="rest"></span></footer>

  <div class="menu file-menu">
    <button><svg><use href="#doc"/></svg>New...<kbd>Ctrl+N</kbd></button>
    <button><svg viewBox="0 0 24 24"><path d="M0 20V3h8l3 3h9v3H6z" fill="#545454"/><path d="M5 10h19l-4 11H0z" fill="#545454"/><path d="M1 20L5 9.500h17" fill="none" stroke="#f9f9f9"/></svg>Open...<kbd>Ctrl+O</kbd></button>
    <button><svg viewBox="0 0 24 24"><circle cx="12" cy="12" r="10.500" fill="#f5f5f5" stroke="#545454" stroke-width="1.800"/><path d="M12 6v7h6" fill="none" stroke="#545454" stroke-width="1.800"/></svg>Open Recent<svg class="arrow"><use href="#sub"/></svg></button>
    <button><svg viewBox="0 0 24 24"><use href="#pcb" width="21" height="21"/><circle cx="17" cy="17" r="7" fill="#bf2641" stroke="#f9f9f9"/><path d="M13 17h8M17 13v8" stroke="#fff" stroke-width="2"/></svg>Append Board...</button>
    <hr>
    <button><svg><use href="#floppy"/></svg>Save<kbd>Ctrl+S</kbd></button>
    <button><svg viewBox="0 0 24 24"><use href="#floppy"/><circle cx="17" cy="17" r="7" fill="#bf2641"/><path d="M15 12v5h6M18 14l3 3-3 3" fill="none" stroke="#fff" stroke-width="1.800"/></svg>Save As...<kbd>Ctrl+Shift+S</kbd></button>
    <button><svg viewBox="0 0 24 24"><use href="#floppy"/><circle cx="17" cy="17" r="7" fill="#bf2641"/><path d="M19 22v-6h-6M16 13l-3 3 3 3" fill="none" stroke="#fff" stroke-width="1.800"/></svg>Revert</button>
    <hr>
    <button><svg viewBox="0 0 24 24"><circle cx="12" cy="12" r="8" fill="none" stroke="#b9b9b9" stroke-width="8"/><path d="M12 4a8 8 0 0 1 8 8M12 20a8 8 0 0 1-8-8" fill="none" stroke="#bf2641" stroke-width="8"/></svg>Rescue</button>
    <hr>
    <button><svg viewBox="0 0 24 24"><use href="#doc"/><g transform="rotate(180 17 17)"><use href="#up" width="24" height="24"/></g></svg>Import<svg class="arrow"><use href="#sub"/></svg></button>
    <button><svg viewBox="0 0 24 24"><use href="#doc"/><use href="#up"/></svg>Export<svg class="arrow"><use href="#sub"/></svg></button>
    <button class="hot"><svg viewBox="0 0 24 24"><path d="M1 22V2h5v8l6-4v4l5-4v4l6-4v16z" fill="#545454"/><path d="M4 14h4v3H4zM10 14h4v3h-4zM16 14h4v3h-4z" fill="#f5f5f5"/></svg>Fabrication Outputs<svg class="arrow"><use href="#sub"/></svg></button>
    <hr>
    <button><svg viewBox="0 0 24 24"><use href="#pcb"/><circle cx="16" cy="16" r="4" fill="#fff" stroke="#bf2641" stroke-width="2.500"/><circle cx="16" cy="16" r="6" fill="none" stroke="#bf2641" stroke-width="2.500" stroke-dasharray="2 2.700"/></svg>Board Setup...</button>
    <hr>
    <button><svg viewBox="0 0 24 24"><path d="M7 1.500h8l4 4V19H7z" fill="#f5f5f5" stroke="#545454" stroke-width="1.300"/><path d="M15 1v5h4M3 1v18M1.500 1h3M1.500 19h3M6 22h14M6 20.500v3M20 20.500v3" fill="none" stroke="#545454" stroke-width="1.200"/></svg>Page Settings...</button>
    <button><svg viewBox="0 0 24 24"><path d="M5 1h14v6H5z" fill="#f5f5f5" stroke="#545454" stroke-width="1.400"/><rect y="7" width="24" height="10" rx="3" fill="#545454"/><path d="M5 13h14v6l-3 3H5z" fill="#f5f5f5" stroke="#545454" stroke-width="1.400"/></svg>Print...<kbd>Ctrl+P</kbd></button>
    <button><svg viewBox="0 0 24 24"><path d="M7 1h10v4H7z" fill="#f5f5f5" stroke="#545454" stroke-width="1.400"/><rect y="3" width="24" height="7" rx="2" fill="#545454"/><path d="M7 9h10v6l-2 2H7zM3 10v11M21 10v11M0 21.500h6M18 21.500h6" fill="#f5f5f5" stroke="#545454" stroke-width="1.400"/></svg>Plot...</button>
    <hr>
    <button><svg viewBox="0 0 24 24"><rect width="24" height="24" rx="3" fill="#bf2641"/><path d="M12 3v9M7 5.500a8 8 0 1 0 10 0" fill="none" stroke="#fff" stroke-width="2"/></svg>Quit<kbd>Ctrl+Q</kbd></button>
  </div>

  <div class="menu fab-menu">
    <button class="hot"><svg viewBox="0 0 24 24"><use href="#file"/><text x="9" y="10">.gbr</text><use href="#up"/></svg>Gerbers (.gbr)...</button>
    <button><svg viewBox="0 0 24 24"><use href="#file"/><text x="9" y="10">.drl</text><use href="#up"/></svg>Drill Files (.drl)...</button>
    <button><svg viewBox="0 0 24 24"><use href="#file"/><text x="9" y="10">.xml</text><use href="#up"/></svg>IPC-2581 File (.xml)...</button>
    <button><svg viewBox="0 0 24 24"><use href="#file"/><text x="9" y="10">.odb</text><use href="#up"/></svg>ODB++ Output File...</button>
    <button><svg viewBox="0 0 24 24"><use href="#file"/><text x="9" y="10">.pos</text><use href="#up"/></svg>Component Placement (.pos, .gbr)...</button>
    <button><svg viewBox="0 0 24 24"><use href="#file"/><text x="9" y="10">.rpt</text><use href="#up"/></svg>Footprint Report (.rpt)...</button>
    <button><svg viewBox="0 0 24 24"><use href="#file"/><text x="9" y="10">.356</text><use href="#up"/></svg>IPC-D-356 Netlist File...</button>
    <button><svg viewBox="0 0 24 24"><use href="#file"/><text x="9" y="10">.bom</text><use href="#up"/></svg>Bill of Materials...</button>
  </div>

  <svg class="pointer" viewBox="0 0 160 110" aria-hidden="true"><path d="M149 7L9 94M18 61L8 95l37 7"/></svg>
</div>
</body>
</html>
```
FILE: styles.css
```css
* { box-sizing: border-box; }
body { margin: 0; font: 14px/20px "Open Sans", "Noto Sans", sans-serif; color: #111; }
button, select, input { font: inherit; color: inherit; margin: 0; }
button { border: 0; background: none; padding: 0; }
.defs { position: absolute; width: 0; height: 0; }
.app { position: relative; display: flex; flex-direction: column; height: 100vh; background: #dcdcdc; overflow: hidden; border-bottom: 2px solid #41474e; }

.titlebar { display: flex; align-items: center; height: 29px; padding-left: 2px; background: linear-gradient(90deg, #eaf4fa, #f3f3f6 40%); flex: none; }
.logo { width: 20px; height: 21px; }
.titlebar h1 { margin: 0 0 0 7px; font-size: 14px; font-weight: 400; }
.winctl { display: flex; margin: 0 -6px 0 auto; }
.winctl button { width: 58px; height: 29px; display: grid; place-items: center; }
.winctl svg { width: 14px; height: 14px; fill: none; stroke: #111; stroke-width: 1.2; }

.menubar { display: flex; height: 23px; background: #fff; flex: none; }
.menubar button { padding: 0 9px; }
.menubar .open { padding-right: 12px; background: #f7f7f7; }

.toolbar { display: flex; align-items: center; gap: 3px; background: #f0f0f0; align-self: flex-start; flex: none; }
.main-tools { height: 47px; padding: 0 6px 0 311px; }
.option-tools { height: 44px; margin: 5px 0 6px; padding: 0 7px 0 303px; gap: 6px; }
.sep { display: flex; justify-content: center; width: 6px; height: 34px; }
.sep::before { content: ""; width: 1px; background: #8c8c8c; }
.option-tools .sep { width: 1px; }
.tool { position: relative; display: grid; place-items: center; width: 38px; height: 38px; flex: none; color: #545454; }
.tool svg { width: 30px; height: 30px; }
.tool.faint { color: #b9b9b9; }
.tool.ghost { opacity: .45; }
.tool.on { background: #b3d6f5; border: 1px solid #0078d7; }
.tool.more::after { content: ""; position: absolute; right: 0; bottom: 0; border: 5px solid; border-color: transparent #000 #000 transparent; }
.ln { fill: none; stroke: #545454; stroke-width: 2.4; stroke-linecap: round; }
.thin { fill: none; stroke: #545454; stroke-width: 1.3; }
.bl { fill: none; stroke: #1a81c4; stroke-width: 2.6; }
.gr { stroke: #b9b9b9; stroke-width: 1.6; }
.lens-a { font: bold 15px "Open Sans", sans-serif; fill: #545454; text-anchor: middle; }
.net { font: 600 10px "Open Sans", sans-serif; fill: #fff; text-anchor: middle; }

.combo { position: relative; display: grid; grid-template-columns: 1fr 16px; align-items: center; height: 28px; background: #fff; border: 1px solid #d0d0d0; border-bottom-color: #b0b0b0; border-radius: 2px; }
.combo select { grid-area: 1 / 1 / 2 / 3; appearance: none; border: 0; background: none; padding: 0 3px; width: 100%; height: 26px; }
.combo > svg { grid-area: 1 / 2; width: 12px; height: 12px; pointer-events: none; }
.track { width: 278px; }
.track select { padding-left: 7px; }
.layer { width: 158px; height: 26px; border-color: #7a7a7a; grid-template-columns: 26px 1fr 16px; }
.layer select { grid-area: 1 / 2 / 2 / 4; height: 24px; padding: 0; }
.layer > svg { grid-area: 1 / 3; }
.swatch { width: 14px; height: 14px; margin-left: 7px; background: #c83434; border: 1px solid #000; }
.pair { width: 30px; height: 30px; margin-right: 4px; }
.pair svg { display: block; width: 30px; height: 30px; }
.grid { width: 209px; }
.zoom { width: 118px; }

.work { display: flex; flex: 1; min-height: 0; }
.rail { display: flex; flex-direction: column; align-items: center; gap: 3px; width: 44px; background: #f0f0f0; flex: none; overflow: hidden; }
.rail .sep { width: 34px; height: 6px; align-items: center; }
.rail .sep::before { width: 34px; height: 1px; }
.rail.left { justify-content: flex-end; padding-bottom: 2px; margin-right: 6px; }
.rail.right { padding-top: 6px; }
.rail .sep, .rail .tool { flex: none; }
.canvas { flex: 1; min-width: 0; margin-bottom: 45px; background: #001023; border: solid #a5a5a5; border-width: 1px 1px 1px 0; }
.board { display: block; width: 100%; height: 100%; }
.cursor { stroke: #e8e8e8; stroke-width: 3; }
.edge { fill: none; stroke: #d0d2cd; stroke-width: 4; }
.fab { font: 57px "DejaVu Sans Mono", monospace; fill: #afafaf; stroke: #afafaf; stroke-width: 1; }
.small { font-size: 40px; }
.fabline { fill: none; stroke: #afafaf; stroke-width: 3; }
.hatched { fill: url(#hatch); stroke: #8f9272; stroke-width: 3; }
.silk { font: 58px "DejaVu Sans Mono", monospace; fill: #f2eda1; stroke: #f2eda1; stroke-width: 1; }
.silk path { fill: none; stroke-width: 5; }
.copper-text { font: bold 110px "DejaVu Sans", sans-serif; fill: #c83434; }
.huge { font-size: 164px; }
.trk { fill: none; stroke: #c83434; stroke-width: 15; stroke-linecap: round; stroke-linejoin: round; }
.pads { fill: #c83434; }
.clear { fill: none; stroke: #c83434; stroke-width: 3; }
.court { fill: none; stroke: #ff26e2; stroke-width: 3; }
.padtext { font: 27px "DejaVu Sans Mono", monospace; fill: #eba5a5; text-anchor: middle; }
.tiny { font-size: 18px; }

.panels { width: 290px; margin-left: 12px; flex: none; font-size: 13px; }
.panels h2 { margin: 0; padding-left: 4px; font-size: 14px; font-weight: 400; line-height: 30px; height: 31px; background: #bababa; }
.appearance { background: #f0f0f0; margin-bottom: 6px; padding: 6px 0 12px 1px; }
.tabs { display: flex; align-items: flex-end; height: 27px; }
.tabs button { height: 26px; padding: 0 5px; border: 1px solid #e2e2e2; border-bottom: 0; border-left: 0; font-size: 14px; }
.tabs .current { height: 27px; padding: 0 12px 2px 7px; background: #f9f9f9; }
.tabs .nets { padding: 0 20px 0 6px; }
.page { background: #f9f9f9; border-bottom: 1px solid #e2e2e2; padding: 7px 0 2px 3px; }
.list { display: flex; height: 349px; overflow: hidden; margin-bottom: 4px; }
.list ul { list-style: none; margin: 0 1px 0 0; padding: 0; width: 271px; background: #f0f0f0; }
.list li { position: relative; display: flex; align-items: center; height: 24px; padding: 0 0 1px 23px; }
.list li.sel { background: #e1e1e1; }
.sel::before { content: ""; position: absolute; left: 7px; top: 5px; border: solid transparent; border-width: 6px 0 6px 6px; border-left-color: #4040ff; }
.list li i { width: 16px; height: 15px; }
.list li svg { width: 16px; height: 16px; margin: 2px 6px 0 7px; }
.c1 { background: #c83434; } .c2 { background: #4d7fc4; } .c3 { background: #840084; } .c4 { background: #000084; }
.c5 { background: #a4938d; } .c6 { background: #00b1b1; } .c7 { background: #f2eda1; } .c8 { background: #e8b2a7; }
.c9 { background-color: #6b3d7b; } .c10 { background-color: #1a7d75; } .c11 { background: #c2c2c2; } .c12 { background: #5994dc; }
.c13 { background: #b4dbd2; } .c14 { background: #d8c852; } .c15 { background: #d0d2cd; }
.mask { background-image: conic-gradient(#0004 25%, transparent 0 50%, #0004 0 75%, transparent 0); background-size: 12px 12px; }
.scroll { flex: 1; background: #f0f0f0; padding: 21px 4px 0 8px; }
.scroll i { display: block; width: 3px; height: 149px; border-radius: 2px; background: #858585; }
.expander { display: flex; align-items: center; width: calc(100% - 6px); height: 28px; margin-left: 6px; padding: 0 0 2px 8px; background: #fff; }
.expander::before { content: ""; margin: -6px 3px 0 0; border: solid transparent; border-width: 5px 0 5px 5px; border-left-color: #000; }
.presets { display: flex; flex-direction: column; padding: 13px 0 0 7px; }
.presets label { margin-bottom: 5px; }
.presets .combo + label { margin-top: 8px; }
.presets .combo { border-right: 0; }
.filter { display: grid; grid-template-columns: 129px 1fr; grid-auto-rows: 25px; padding: 6px 0 6px 6px; background: #f0f0f0; }
.filter label { display: flex; align-items: center; gap: 3px; }
.filter input { appearance: none; display: grid; place-items: center; width: 16px; height: 16px; margin-top: -2px; border: 1px solid #666; border-radius: 3px; background: #f8f8f8; }
.filter input:checked { background: #005fb8; border-color: #005fb8; }
.filter input:checked::after { content: ""; width: 8px; height: 5px; margin-top: -2px; border: solid #fff; border-width: 0 0 1px 1px; transform: rotate(-45deg); }

.status { display: flex; height: 28px; flex: none; background: #f0f0f0; border-top: 1px solid #d5d5d5; line-height: 28px; white-space: nowrap; }
.status span { border-right: 1px solid #d5d5d5; padding-left: 3px; }
.status .msg { width: 585px; }
.status .gap { width: 98px; border: 0; }
.status .pos { width: 202px; }
.status .delta { width: 321px; padding-left: 4px; }
.status .rest { flex: 1; border: 0; }

.menu { position: absolute; background: #f9f9f9; border: 1px solid #dedede; border-radius: 6px; box-shadow: 0 4px 10px #0004; padding: 3px 6px 0; }
.file-menu { left: 0; top: 53px; width: 313px; height: 584px; }
.fab-menu { left: 307px; top: 406px; width: 338px; height: 262px; }
.menu button { display: flex; align-items: center; width: 100%; height: 32px; padding: 0 24px 0 4px; border-radius: 4px; text-align: left; white-space: nowrap; }
.menu button > svg:first-child { width: 24px; height: 24px; margin-right: 16px; flex: none; overflow: visible; }
.menu .hot { background: #f0f0f0; }
.menu kbd { margin-left: auto; font: inherit; }
.menu .arrow { width: 8px; height: 14px; margin: 0 -12px 0 auto; }
.menu hr { width: 291px; height: 1px; margin: 5px 4px; border: 0; background: #d5d5d5; }
.menu text { font: 9px "Open Sans", sans-serif; fill: #fff; text-anchor: middle; }
.pointer { position: absolute; left: 451px; top: 323px; width: 160px; height: 110px; fill: none; stroke: #ffd430; stroke-width: 8; stroke-linecap: round; stroke-linejoin: round; pointer-events: none; }
```
